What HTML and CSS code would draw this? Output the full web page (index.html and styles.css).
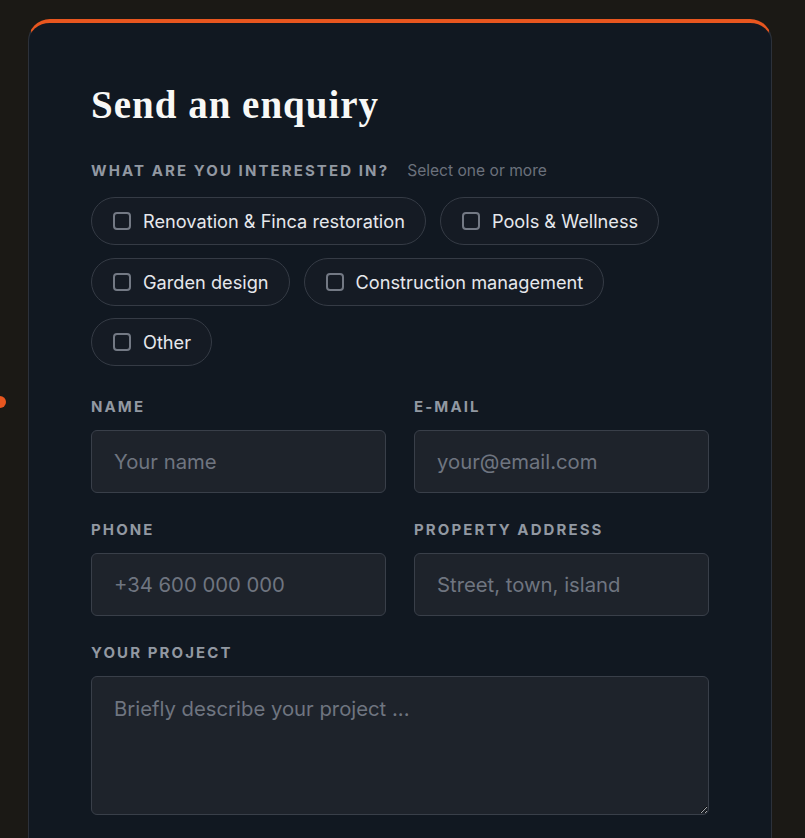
FILE: index.html
```html
<!DOCTYPE html>
<html lang="en">
<head>
<meta charset="utf-8">
<title>Send an enquiry</title>
<link rel="stylesheet" href="styles.css">
</head>
<body>
<span class="dot"></span>
<main class="page">
  <form class="card">
    <h1 class="title">Send an enquiry</h1>

    <div class="label-row">
      <span class="label">What are you interested in?</span>
      <span class="hint">Select one or more</span>
    </div>
    <div class="chips">
      <label class="chip"><span class="box"></span>Renovation &amp; Finca restoration</label>
      <label class="chip"><span class="box"></span>Pools &amp; Wellness</label>
      <label class="chip"><span class="box"></span>Garden design</label>
      <label class="chip"><span class="box"></span>Construction management</label>
      <label class="chip"><span class="box"></span>Other</label>
    </div>

    <div class="grid">
      <div class="field">
        <span class="label">Name</span>
        <input class="input" type="text" placeholder="Your name">
      </div>
      <div class="field">
        <span class="label">E-mail</span>
        <input class="input" type="email" placeholder="your@email.com">
      </div>
      <div class="field">
        <span class="label">Phone</span>
        <input class="input" type="tel" placeholder="+34 600 000 000">
      </div>
      <div class="field">
        <span class="label">Property address</span>
        <input class="input" type="text" placeholder="Street, town, island">
      </div>
      <div class="field full">
        <span class="label">Your project</span>
        <textarea class="input area" placeholder="Briefly describe your project ..."></textarea>
      </div>
    </div>
  </form>
</main>
</body>
</html>
```

FILE: styles.css
```css
* { box-sizing: border-box; }

html, body {
  margin: 0;
  background: #1b1915;
  overflow: hidden;
  height: 838px;
}

body {
  position: relative;
  font-family: Inter, "Liberation Sans", sans-serif;
}

.dot {
  position: absolute;
  left: -6px;
  top: 396px;
  width: 12px;
  height: 12px;
  border-radius: 50%;
  background: #e8561f;
}

.page {
  padding: 19px 0 0 28px;
}

.card {
  width: 744px;
  min-height: 900px;
  background: #111821;
  border: 1px solid #2c313a;
  border-top: 4px solid #e8561f;
  border-radius: 22px;
  padding: 59px 62px 40px 62px;
}

.title {
  margin: 0 0 34px;
  font-family: "Liberation Serif", "Times New Roman", serif;
  font-weight: 700;
  font-size: 39px;
  line-height: 46px;
  letter-spacing: 1px;
  color: #f8f8f6;
}

.label-row {
  display: flex;
  align-items: baseline;
  gap: 18px;
  margin-bottom: 17px;
}

.label {
  display: block;
  font-size: 15px;
  line-height: 18px;
  font-weight: 700;
  letter-spacing: 2.1px;
  text-transform: uppercase;
  color: #9298a2;
}

.hint {
  font-size: 15.6px;
  line-height: 18px;
  color: #6b717c;
}

.chips {
  display: flex;
  flex-wrap: wrap;
  gap: 12.5px 14px;
  margin-bottom: 32px;
}

.chip {
  display: flex;
  align-items: center;
  gap: 12px;
  height: 48px;
  padding: 0 20px 0 21px;
  border: 1px solid #353b45;
  border-radius: 999px;
  background: #151b24;
  color: #e6e8ec;
  font-size: 18.2px;
}

.box {
  width: 18px;
  height: 18px;
  border: 2px solid #737984;
  border-radius: 4px;
  flex: none;
}

.grid {
  display: grid;
  grid-template-columns: 1fr 1fr;
  gap: 28px 28px;
}

.field .label {
  margin-bottom: 14px;
}

.full {
  grid-column: 1 / -1;
}

.input {
  display: block;
  width: 100%;
  height: 63px;
  padding: 0 22px;
  background: #1e232b;
  border: 1px solid #393f49;
  border-radius: 6px;
  color: #e6e8ec;
  font-family: Inter, "Liberation Sans", sans-serif;
  font-size: 20.3px;
  outline: none;
  color-scheme: dark;
}

.input::placeholder {
  color: #6f7580;
}

.area {
  height: 139px;
  padding: 20px 22px;
  resize: vertical;
  line-height: 24px;
}
```
